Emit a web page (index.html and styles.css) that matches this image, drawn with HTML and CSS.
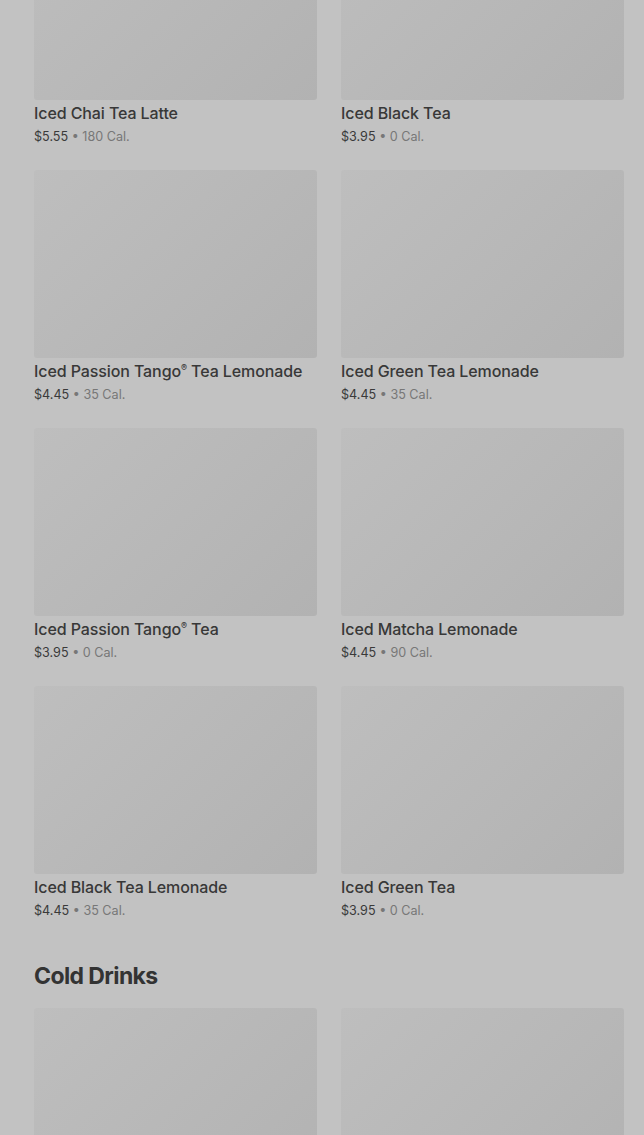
FILE: index.html
```html
<!DOCTYPE html>
<html lang="en">
<head>
	<meta charset="UTF-8">
	<title>Menu</title>
	<link rel="stylesheet" href="styles.css">
</head>
<body>
	<div class="page">
		<ul class="grid">
			<li class="card">
				<div class="pic"></div>
				<h3>Iced Chai Tea Latte</h3>
				<p><span class="price">$5.55</span> • 180 Cal.</p>
			</li>
			<li class="card">
				<div class="pic"></div>
				<h3>Iced Black Tea</h3>
				<p><span class="price">$3.95</span> • 0 Cal.</p>
			</li>
			<li class="card">
				<div class="pic"></div>
				<h3>Iced Passion Tango<sup>®</sup> Tea Lemonade</h3>
				<p><span class="price">$4.45</span> • 35 Cal.</p>
			</li>
			<li class="card">
				<div class="pic"></div>
				<h3>Iced Green Tea Lemonade</h3>
				<p><span class="price">$4.45</span> • 35 Cal.</p>
			</li>
			<li class="card">
				<div class="pic"></div>
				<h3>Iced Passion Tango<sup>®</sup> Tea</h3>
				<p><span class="price">$3.95</span> • 0 Cal.</p>
			</li>
			<li class="card">
				<div class="pic"></div>
				<h3>Iced Matcha Lemonade</h3>
				<p><span class="price">$4.45</span> • 90 Cal.</p>
			</li>
			<li class="card">
				<div class="pic"></div>
				<h3>Iced Black Tea Lemonade</h3>
				<p><span class="price">$4.45</span> • 35 Cal.</p>
			</li>
			<li class="card">
				<div class="pic"></div>
				<h3>Iced Green Tea</h3>
				<p><span class="price">$3.95</span> • 0 Cal.</p>
			</li>
		</ul>
		<h2>Cold Drinks</h2>
		<ul class="grid">
			<li class="card">
				<div class="pic"></div>
			</li>
			<li class="card">
				<div class="pic"></div>
			</li>
		</ul>
	</div>
</body>
</html>
```

FILE: styles.css
```css
*{
	margin:0;
	padding:0;
	list-style: none;
	box-sizing: border-box;
}
body{
	background:#c2c2c2;
	font-family: Inter, "Noto Sans", sans-serif;
	color:#383838;
	overflow:hidden;
}
.page{
	padding:0 20px 0 34px;
	margin-top:-88px;
}
.grid{
	display:grid;
	grid-template-columns:283px 283px;
	column-gap:24px;
	row-gap:24px;
}
.pic{
	height:188px;
	border-radius:3px;
	background:linear-gradient(135deg,#bebebe 0%,#b8b8b8 50%,#b2b2b2 100%);
}
.card h3{
	margin-top:3px;
	font-size:16px;
	line-height:20px;
	font-weight:500;
	color:#383838;
	letter-spacing:-0.1px;
}
.card sup{
	font-size:9px;
	line-height:0;
	vertical-align:6px;
}
.card p{
	margin-top:5px;
	font-size:12.6px;
	line-height:18px;
	color:#777;
}
.card .price{
	color:#3a3a3a;
}
h2{
	margin:41px 0 17px;
	font-size:23px;
	line-height:30px;
	font-weight:700;
	color:#333;
	letter-spacing:-0.6px;
}
```
